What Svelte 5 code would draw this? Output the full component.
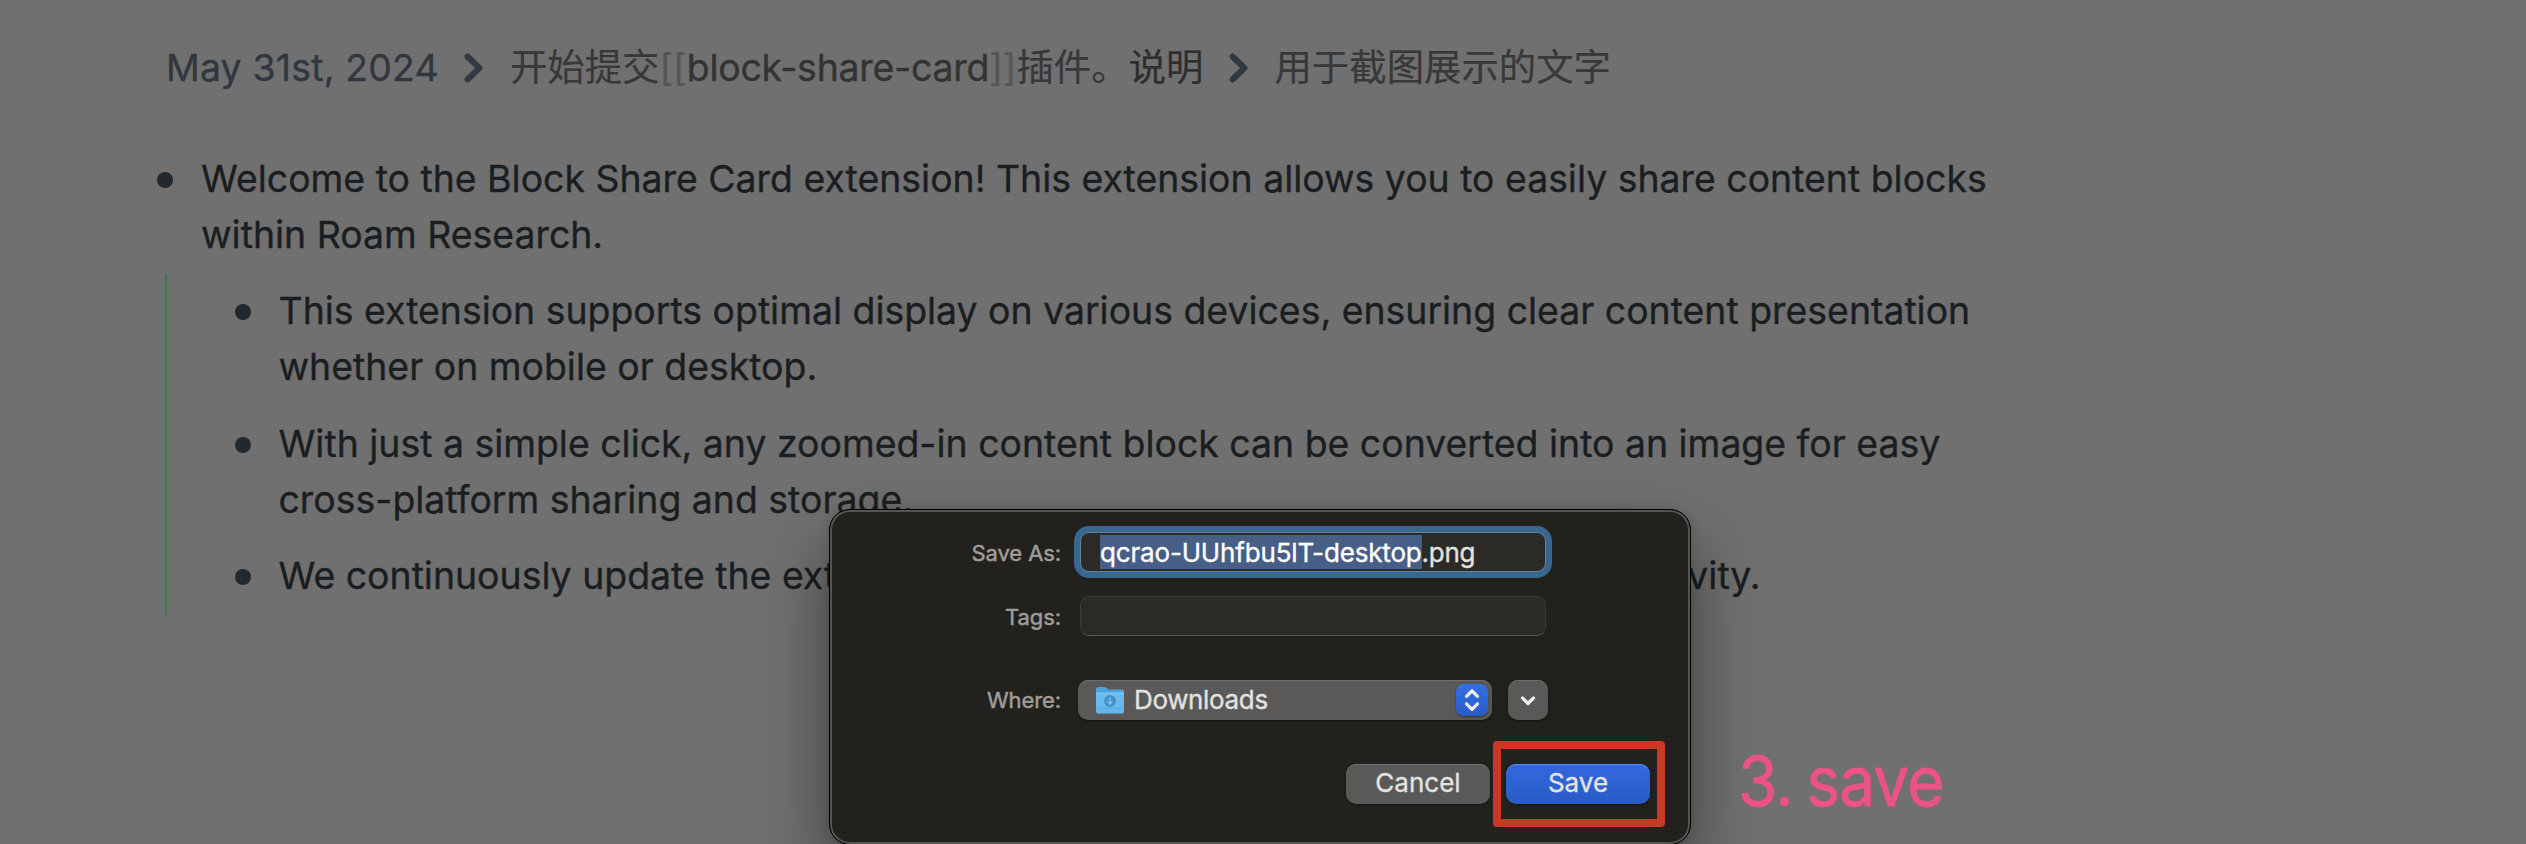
<script>
  const children = [
    ['This extension supports optimal display on various devices, ensuring clear content presentation', 'whether on mobile or desktop.'],
    ['With just a simple click, any zoomed-in content block can be converted into an image for easy', 'cross-platform sharing and storage.']
  ];
</script>

{#snippet chevron()}
  <svg class="chev" width="20" height="30" viewBox="0 0 20 30"><path d="M3.500 3.500 L15.500 15 L3.500 26.500" /></svg>
{/snippet}

<main class="page">
  <nav class="crumbs">
    <span class="date">May 31st, 2024</span>
    {@render chevron()}
    <span class="crumb">开始提交<i>[[</i><span class="ref">block-share-card</span><i>]]</i>插件。<span class="dark">说明</span></span>
    {@render chevron()}
    <span class="crumb">用于截图展示的文字</span>
  </nav>

  <section class="block">
    <span class="bullet"></span>
    <p>Welcome to the Block Share Card extension! This extension allows you to easily share content blocks<br />within Roam Research.</p>
  </section>
  <ul class="children">
    {#each children as lines}
      <li class="block">
        <span class="bullet"></span>
        <p>{lines[0]}<br />{lines[1]}</p>
      </li>
    {/each}
    <li class="block">
      <span class="bullet"></span>
      <p class="split"><span>We continuously update the ext</span><span>vity.</span></p>
    </li>
  </ul>

  <div class="dialog">
    <div class="row name">
      <span class="label">Save As:</span>
      <div class="field focus"><span class="sel">qcrao-UUhfbu5lT-desktop</span><span class="ext">.png</span></div>
    </div>
    <div class="row tags">
      <span class="label">Tags:</span>
      <div class="field"></div>
    </div>
    <div class="row where">
      <span class="label">Where:</span>
      <div class="popup">
        <svg class="folder" width="30" height="30" viewBox="0 0 30 30">
          <defs><linearGradient id="folder-front" x1="0" y1="0" x2="0" y2="1"><stop offset="0" stop-color="#6cbdf0" /><stop offset="1" stop-color="#62b6ec" /></linearGradient></defs>
          <path d="M1 4.500Q1 2 3 2H9Q10.500 2 11.500 3L13 4.500H27Q29 4.500 29 6.500V12H1Z" fill="#4ba4df" />
          <path d="M1 8H29V26.500Q29 28.500 27 28.500H3Q1 28.500 1 26.500Z" fill="url(#folder-front)" />
          <path d="M1 8H29" stroke="#7fd0f8" />
          <path d="M1 23.500H29" stroke="#53a8e0" stroke-width=".8" />
          <circle cx="15" cy="16" r="6" fill="#4590cc" />
          <path d="M15 12.700V18.500M12.500 16.500L15 19L17.500 16.500" fill="none" stroke="#7fc4f0" stroke-width="1.400" />
        </svg>
        <span class="place">Downloads</span>
        <div class="stepper"><svg width="32" height="32" viewBox="0 0 32 32"><path d="M10.500 12.300L16 6.800L21.500 12.300M10.500 19.800L16 25.300L21.500 19.800" /></svg></div>
      </div>
      <div class="expand"><svg width="40" height="40" viewBox="0 0 40 40"><path d="M14.500 18L20 23.500L25.500 18" /></svg></div>
    </div>
    <div class="actions">
      <button>Cancel</button>
      <button class="primary">Save</button>
    </div>
  </div>
  <div class="mark"></div>
  <div class="note">3. save</div>
</main>

<style>
  :global(body) { margin: 0; background: #707070; }
  .page { position: relative; width: 2526px; height: 844px; overflow: hidden; background: #707070; box-sizing: border-box; padding: 40px 0 0 154px; font-family: Inter, "Noto Sans CJK SC", sans-serif; font-size: 37.4px; line-height: 56px; color: #1a1e21; white-space: nowrap; -webkit-text-stroke: .35px currentColor; }
  .crumbs { display: flex; align-items: center; height: 56px; padding-left: 12px; margin-bottom: 54.500px; }
  .date { color: #31373e; letter-spacing: .2px; }
  .chev { margin: 0 25.500px; fill: none; stroke: #313a42; stroke-width: 6; stroke-linecap: round; stroke-linejoin: round; }
  .crumb { color: #383838; -webkit-text-stroke-width: .2px; }
  .ref { color: #333; letter-spacing: -.23px; -webkit-text-stroke-width: .35px; }
  .dark { color: #2e2e2e; }
  i { font-style: normal; color: #565656; }
  p { margin: 0; }
  .block { display: flex; align-items: flex-start; margin: 0 0 20.500px; }
  .bullet { flex: none; width: 16px; height: 16px; border-radius: 50%; background: #22292e; margin: 21px 28px 0 3px; }
  .children { list-style: none; margin: -9px 0 0 11px; padding: 9px 0 0 65px; border-left: 2px solid #40774e; height: 332px; }
  .children .bullet { margin-right: 28px; margin-left: 2.500px; }
  .split { display: flex; width: 1482px; justify-content: space-between; }

  .dialog { position: absolute; left: 829px; top: 509px; width: 862px; height: 336px; box-sizing: border-box; border: 1px solid #000; border-radius: 21px; background: #22211d; box-shadow: inset 0 0 0 2px #555450, 0 36px 70px rgba(0,0,0,.45), 0 0 12px rgba(0,0,0,.12); color: #e2e2e1; font-size: 26px; line-height: 32px; }
  .row { display: flex; align-items: center; }
  .label { width: 231px; text-align: right; color: #9d9c9a; font-size: 22px; margin-right: 19px; letter-spacing: -.1px; padding-top: 2px; -webkit-text-stroke-width: .5px; }
  .where .label { padding-top: 0; }
  .field { width: 466px; height: 40px; box-sizing: border-box; border: 1px solid #3c3b38; border-bottom-color: #5a5956; border-radius: 9px; background: #2b2a27; display: flex; align-items: center; padding-left: 19px; }
  .focus { border-color: #5d84a0; box-shadow: 0 0 0 6px #3a678e; }
  .sel { background: #475f86; color: #fff; line-height: 33px; padding-top: 1px; letter-spacing: -.17px; }
  .ext { padding-top: 1px; letter-spacing: -.25px; }
  .place { letter-spacing: -.35px; padding-bottom: 1px; }
  .name { padding-top: 22px; }
  .tags { padding-top: 24px; }
  .where { padding-top: 44px; }
  .where .label { margin-right: 17px; }
  .popup { width: 414px; height: 40px; box-sizing: border-box; display: flex; align-items: center; padding: 0 4px 0 17px; border-radius: 10px; background: #5a5957; box-shadow: inset 0 1px #706f6d, 0 1px 2px #111; }
  .folder { margin-right: 9px; }
  .stepper { margin-left: auto; width: 32px; height: 32px; border-radius: 8px; background: linear-gradient(#3670e4, #285bc7); box-shadow: 0 1px 2px #333; }
  .stepper svg, .expand svg { display: block; fill: none; stroke: #eee; stroke-width: 3.2; stroke-linecap: round; stroke-linejoin: round; }
  .expand { width: 40px; height: 40px; border-radius: 10px; background: #5a5957; margin-left: 16px; box-shadow: inset 0 1px #706f6d, 0 1px 2px #111; }
  .actions { display: flex; gap: 16px; padding: 44px 0 0 516px; }
  button { width: 144px; height: 40px; border: 0; border-radius: 10px; padding: 0 0 2px; background: #5a5957; color: inherit; font: inherit; box-shadow: inset 0 1px #706f6d, 0 1px 2px #111; -webkit-text-stroke: inherit; }
  .primary { background: linear-gradient(#3268de, #2a5bc6); box-shadow: inset 0 1px #5d88e6, 0 1px 2px #111; }
  .mark { position: absolute; left: 1493px; top: 741px; width: 172px; height: 86px; box-sizing: border-box; border: 8px solid #c93725; border-radius: 4px; }
  .note { position: absolute; left: 1738px; top: 741px; font-size: 69px; line-height: 80px; letter-spacing: -1px; word-spacing: -4px; color: #ea5288; -webkit-text-stroke-width: .8px; transform: scaleX(.93); transform-origin: left; }
</style>
